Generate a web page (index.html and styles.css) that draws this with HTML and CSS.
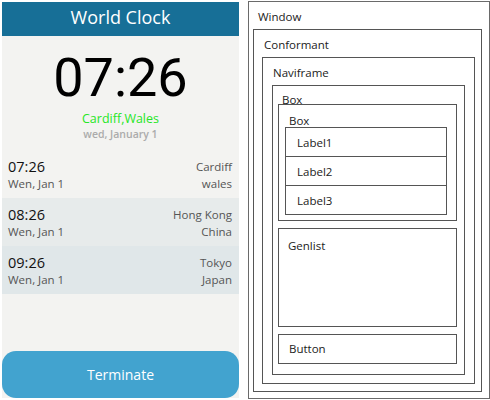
FILE: index.html
```html
<!DOCTYPE html>
<html>
<head>
<meta charset="utf-8">
<link rel="stylesheet" href="styles.css">
</head>
<body>
<div class="page">
  <div class="phone">
    <div class="header">World Clock</div>
    <div class="clock">
      <div class="big-time">07:26</div>
      <div class="city">Cardiff,Wales</div>
      <div class="date">wed, January 1</div>
    </div>
    <div class="list">
      <div class="row">
        <div class="row-left"><div class="time">07:26</div><div class="sub">Wen, Jan 1</div></div>
        <div class="row-right"><div class="sub first">Cardiff</div><div class="sub">wales</div></div>
      </div>
      <div class="row alt1">
        <div class="row-left"><div class="time">08:26</div><div class="sub">Wen, Jan 1</div></div>
        <div class="row-right"><div class="sub first">Hong Kong</div><div class="sub">China</div></div>
      </div>
      <div class="row alt2">
        <div class="row-left"><div class="time">09:26</div><div class="sub">Wen, Jan 1</div></div>
        <div class="row-right"><div class="sub first">Tokyo</div><div class="sub">Japan</div></div>
      </div>
    </div>
    <div class="spacer"></div>
    <div class="terminate">Terminate</div>
  </div>

  <div class="box window">
    <div class="title t-window">Window</div>
    <div class="box conformant">
      <div class="title t-conformant">Conformant</div>
      <div class="box naviframe">
        <div class="title t-naviframe">Naviframe</div>
        <div class="box outer-box">
          <div class="title t-outer">Box</div>
          <div class="box inner-box">
            <div class="title t-inner">Box</div>
            <div class="box labels">
              <div class="label-row">Label1</div>
              <div class="label-row">Label2</div>
              <div class="label-row">Label3</div>
            </div>
          </div>
          <div class="box genlist">
            <div class="title t-genlist">Genlist</div>
          </div>
          <div class="box button-box">Button</div>
        </div>
      </div>
    </div>
  </div>
</div>
</body>
</html>
```

FILE: styles.css
```css
html, body {
  margin: 0;
  padding: 0;
  background: #ffffff;
}

.page {
  display: flex;
  align-items: flex-start;
  width: 490px;
  height: 400px;
  overflow: hidden;
}

/* ---------- phone ---------- */
.phone {
  width: 237px;
  height: 396px;
  margin: 2px 0 0 2px;
  background: #f3f3f1;
  display: flex;
  flex-direction: column;
  font-family: "Open Sans", "Noto Sans", sans-serif;
}

.header {
  flex: none;
  height: 34px;
  box-sizing: border-box;
  padding-bottom: 4px;
  background: #176f97;
  color: #ffffff;
  font-size: 18px;
  line-height: 30px;
  text-align: center;
}

.clock {
  flex: none;
  height: 114px;
  box-sizing: border-box;
  padding-top: 14px;
  text-align: center;
}

.big-time {
  font-family: Roboto, "Open Sans", sans-serif;
  font-size: 54px;
  line-height: 56px;
  color: #000000;
}

.city {
  margin-top: 5px;
  color: #26e626;
  font-size: 12.5px;
  line-height: 16px;
}

.date {
  color: #ababab;
  font-size: 10.5px;
  font-weight: 600;
  line-height: 14px;
}

.list {
  flex: none;
}

.row {
  height: 48px;
  box-sizing: border-box;
  padding: 8px 7px 0 6px;
  display: flex;
  justify-content: space-between;
}

.row.alt1 {
  background: #e7ebeb;
}

.row.alt2 {
  background: #e0e7e9;
}

.row-right {
  text-align: right;
}

.time {
  font-size: 14.5px;
  line-height: 18px;
  color: #111111;
}

.sub {
  font-size: 11.5px;
  line-height: 16px;
  color: #555555;
}

.sub.first {
  line-height: 18px;
}

.spacer {
  flex: 1;
}

.terminate {
  flex: none;
  height: 47px;
  border-radius: 14px;
  background: #42a3cf;
  color: #ffffff;
  font-size: 14px;
  line-height: 47px;
  text-align: center;
}

/* ---------- diagram ---------- */
.box {
  border: 1px solid #555555;
  box-sizing: border-box;
  display: flex;
  flex-direction: column;
  font-family: "Open Sans", "Noto Sans", sans-serif;
  font-size: 11.5px;
  color: #222222;
}

.title {
  flex: none;
  box-sizing: border-box;
}

.window {
  flex: none;
  width: 242px;
  height: 398px;
  margin: 1px 0 0 9px;
  border-color: #6a6a6a;
}

.t-window {
  height: 27px;
  padding: 3px 0 0 9px;
  line-height: 24px;
}

.conformant {
  flex: 1;
  margin: 0 7px 6px 4px;
}

.t-conformant {
  height: 27px;
  padding: 4px 0 0 10px;
  line-height: 22px;
}

.naviframe {
  flex: 1;
  margin: 0 6px 7px 8px;
}

.t-naviframe {
  height: 27px;
  padding: 4px 0 0 10px;
  line-height: 22px;
}

.outer-box {
  flex: 1;
  margin: 0 9px 8px 9px;
}

.t-outer {
  height: 18px;
  padding: 4px 0 0 9px;
  line-height: 20px;
}

.inner-box {
  flex: none;
  height: 117px;
  margin: 0 7px 0 5px;
}

.t-inner {
  height: 22px;
  padding: 6px 0 0 10px;
  line-height: 20px;
}

.labels {
  flex: 1;
  margin: 0 9px 5px 6px;
}

.label-row {
  flex: 1;
  padding-left: 11px;
  display: flex;
  align-items: center;
}

.label-row + .label-row {
  border-top: 1px solid #555555;
}

.genlist {
  flex: 1;
  margin: 7px 7px 0 5px;
}

.t-genlist {
  padding: 7px 0 0 9px;
  line-height: 20px;
}

.button-box {
  flex: none;
  height: 30px;
  margin: 7px 7px 10px 5px;
  padding-left: 10px;
  line-height: 28px;
  display: block;
}
```
